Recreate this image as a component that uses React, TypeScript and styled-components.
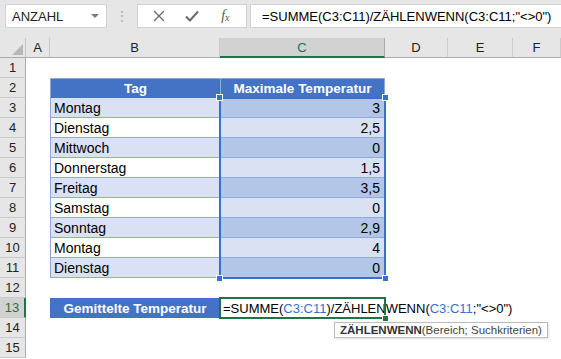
import React from 'react';
import styled, { createGlobalStyle, css } from 'styled-components';

const BLUE = '#4472C4';
const BAND = '#D9E1F2';
const BAND_SEL = '#B4C6E7';
const LINE = '#8EA9DB';
const REF = '#3A6FCB';
const GREEN = '#217346';

const GlobalStyle = createGlobalStyle`
	body {
		margin: 0;
		font-family: 'Liberation Sans', Arial, sans-serif;
		background: #ffffff;
	}
`;

export default function App() {
	return (
		<>
			<GlobalStyle />
			<Screen>
				<FormulaBar>
					<NameBox>
						<span>ANZAHL</span>
						<DropArrow />
					</NameBox>
					<Grip>⋮</Grip>
					<ButtonGroup>
						<IconButton>
							<svg width="12" height="12" viewBox="0 0 12 12">
								<path d="M1 1 L11 11 M11 1 L1 11" stroke="#6b6b6b" strokeWidth="1.3" fill="none" />
							</svg>
						</IconButton>
						<IconButton>
							<svg width="14" height="12" viewBox="0 0 14 12">
								<path d="M1 6.5 L5 10.5 L13 1.5" stroke="#6b6b6b" strokeWidth="2" fill="none" />
							</svg>
						</IconButton>
						<IconButton>
							<Fx>
								f<sub>x</sub>
							</Fx>
						</IconButton>
					</ButtonGroup>
					<FormulaInput>=SUMME(C3:C11)/ZÄHLENWENN(C3:C11;"&lt;&gt;0")</FormulaInput>
				</FormulaBar>
				<SheetWrap>
					<Sheet>
						<Corner />
						{cols.map((c) => (
							<ColHead key={c} $active={c === 'C'}>
								{c}
							</ColHead>
						))}
						{rows.map((r) => (
							<React.Fragment key={r}>
								<RowHead $active={r === 13}>{r}</RowHead>
								<Cell />
								{renderB(r)}
								{renderC(r)}
								<Cell />
								<Cell />
								<Cell />
							</React.Fragment>
						))}
					</Sheet>
					<OverlayGrid>
						<RangeBox>
							<Handle $top $left />
							<Handle $top />
							<Handle $left />
							<Handle />
						</RangeBox>
					</OverlayGrid>
				</SheetWrap>
			</Screen>
		</>
	);
}

function renderB(r: number) {
	if (r === 2) return <HeadCell>Tag</HeadCell>;
	if (r === 13) return <HeadCell $plain>Gemittelte Temperatur</HeadCell>;
	const d = days[r - 3];
	if (d) return <DayCell $band={r % 2 === 1}>{d[0]}</DayCell>;
	return <Cell />;
}

function renderC(r: number) {
	if (r === 2) return <HeadCell $divider>Maximale Temperatur</HeadCell>;
	if (r === 13)
		return (
			<EditCell>
				=SUMME(<Ref>C3:C11</Ref>)/ZÄHLENWENN(<Ref>C3:C11</Ref>;"&lt;&gt;0")
				<FillHandle />
				<Tip>
					<b>ZÄHLENWENN</b>(Bereich; Suchkriterien)
				</Tip>
			</EditCell>
		);
	const d = days[r - 3];
	if (d) return <ValueCell $band={r % 2 === 1}>{d[1]}</ValueCell>;
	return <Cell />;
}

const cols = ['A', 'B', 'C', 'D', 'E', 'F'];
const rows = Array.from({ length: 15 }, (_, i) => i + 1);
const days = [
	['Montag', '3'],
	['Dienstag', '2,5'],
	['Mittwoch', '0'],
	['Donnerstag', '1,5'],
	['Freitag', '3,5'],
	['Samstag', '0'],
	['Sonntag', '2,9'],
	['Montag', '4'],
	['Dienstag', '0'],
];

const Screen = styled.div`
	width: 561px;
	height: 359px;
	overflow: hidden;
	background: #ffffff;
`;

const FormulaBar = styled.div`
	display: flex;
	align-items: flex-start;
	height: 38px;
	padding: 4px 0 0 5px;
	box-sizing: border-box;
	background: #e6e6e6;
`;

const Box = css`
	height: 24px;
	box-sizing: border-box;
	background: #ffffff;
	border: 1px solid #d2d2d2;
	display: flex;
	align-items: center;
`;

const NameBox = styled.div`
	${Box};
	width: 102px;
	padding: 0 6px;
	justify-content: space-between;
	font-size: 13px;
	color: #222;
`;

const DropArrow = styled.div`
	width: 0;
	height: 0;
	border-left: 4px solid transparent;
	border-right: 4px solid transparent;
	border-top: 4px solid #7a7a7a;
	margin-right: 1px;
`;

const Grip = styled.div`
	width: 30px;
	height: 24px;
	display: flex;
	align-items: center;
	justify-content: center;
	color: #b0b0b0;
	font-size: 14px;
`;

const ButtonGroup = styled.div`
	${Box};
	width: 110px;
	justify-content: space-around;
	padding: 0 4px;
`;

const IconButton = styled.div`
	width: 28px;
	display: flex;
	justify-content: center;
	align-items: center;
`;

const Fx = styled.span`
	font-family: 'Liberation Serif', 'Times New Roman', serif;
	font-style: italic;
	font-size: 14px;
	color: #555;
	sub {
		font-size: 10px;
		vertical-align: -1px;
	}
`;

const FormulaInput = styled.div`
	${Box};
	flex: 1;
	margin-left: 3px;
	padding-left: 11px;
	border-right: none;
	font-size: 13px;
	color: #000;
	white-space: nowrap;
`;

const SheetWrap = styled.div`
	position: relative;
`;

const gridTemplate = css`
	display: grid;
	grid-template-columns: 26px 24px 170px 165px 63px 65px 1fr;
	grid-template-rows: repeat(16, 20px);
`;

const Sheet = styled.div`
	${gridTemplate};
`;

const OverlayGrid = styled.div`
	${gridTemplate};
	position: absolute;
	inset: 0;
	pointer-events: none;
	z-index: 2;
`;

const Corner = styled.div`
	background: #e6e6e6;
	border-right: 1px solid #c6c6c6;
	border-bottom: 1px solid #ababab;
	position: relative;
	&::after {
		content: '';
		position: absolute;
		right: 2px;
		bottom: 2px;
		border-left: 11px solid transparent;
		border-bottom: 11px solid #b8b8b8;
	}
`;

const ColHead = styled.div<{ $active?: boolean }>`
	display: flex;
	align-items: center;
	justify-content: center;
	font-size: 13px;
	color: ${(p) => (p.$active ? GREEN : '#222')};
	background: ${(p) => (p.$active ? '#d2d2d2' : '#e6e6e6')};
	border-right: 1px solid ${(p) => (p.$active ? '#ababab' : '#cacaca')};
	border-bottom: ${(p) => (p.$active ? `2px solid ${GREEN}` : '1px solid #ababab')};
`;

const RowHead = styled.div<{ $active?: boolean }>`
	display: flex;
	align-items: center;
	justify-content: center;
	font-size: 13px;
	color: ${(p) => (p.$active ? GREEN : '#222')};
	background: ${(p) => (p.$active ? '#d2d2d2' : '#e6e6e6')};
	border-bottom: 1px solid #cacaca;
	border-right: ${(p) => (p.$active ? `2px solid ${GREEN}` : '1px solid #ababab')};
`;

const Cell = styled.div`
	font-size: 14px;
	color: #000;
	display: flex;
	align-items: center;
	white-space: nowrap;
	box-sizing: border-box;
	min-width: 0;
`;

const HeadCell = styled(Cell)<{ $divider?: boolean; $plain?: boolean }>`
	justify-content: center;
	background: ${BLUE};
	color: #ffffff;
	font-weight: bold;
	font-size: 13.5px;
	border-top: ${(p) => (p.$plain ? 'none' : `1px solid ${LINE}`)};
	border-left: ${(p) => (p.$divider ? `1px solid ${LINE}` : p.$plain ? 'none' : `1px solid ${LINE}`)};
	border-right: ${(p) => (p.$divider ? `1px solid ${LINE}` : 'none')};
`;

const DayCell = styled(Cell)<{ $band?: boolean }>`
	padding-left: 3px;
	background: ${(p) => (p.$band ? BAND : '#ffffff')};
	border-left: 1px solid ${LINE};
	border-bottom: 1px solid ${LINE};
`;

const ValueCell = styled(Cell)<{ $band?: boolean }>`
	justify-content: flex-end;
	padding-right: 5px;
	background: ${(p) => (p.$band ? BAND_SEL : BAND)};
	border-bottom: 1px solid ${LINE};
`;

const EditCell = styled(Cell)`
	position: relative;
	z-index: 3;
	overflow: visible;
	padding-left: 3px;
	font-size: 13px;
	outline: 2px solid ${GREEN};
	outline-offset: -1px;
	background: #ffffff;
`;

const Ref = styled.span`
	color: ${REF};
`;

const FillHandle = styled.div`
	position: absolute;
	right: -4px;
	bottom: -4px;
	width: 5px;
	height: 5px;
	background: ${GREEN};
	border: 1px solid #ffffff;
`;

const Tip = styled.div`
	position: absolute;
	left: 114px;
	top: 24px;
	padding: 1px 5px;
	background: #ffffff;
	border: 1px solid #bcbcbc;
	box-shadow: 1px 1px 2px rgba(0, 0, 0, 0.12);
	font-size: 11.5px;
	color: #444;
	white-space: nowrap;
	b {
		color: #333;
	}
`;

const RangeBox = styled.div`
	grid-column: 4 / 5;
	grid-row: 4 / 13;
	margin: -1px;
	border: 2px solid ${REF};
	position: relative;
`;

const Handle = styled.div<{ $top?: boolean; $left?: boolean }>`
	position: absolute;
	width: 5px;
	height: 5px;
	background: ${REF};
	border: 1px solid #ffffff;
	${(p) => (p.$top ? 'top: -5px;' : 'bottom: -5px;')}
	${(p) => (p.$left ? 'left: -5px;' : 'right: -5px;')}
`;
